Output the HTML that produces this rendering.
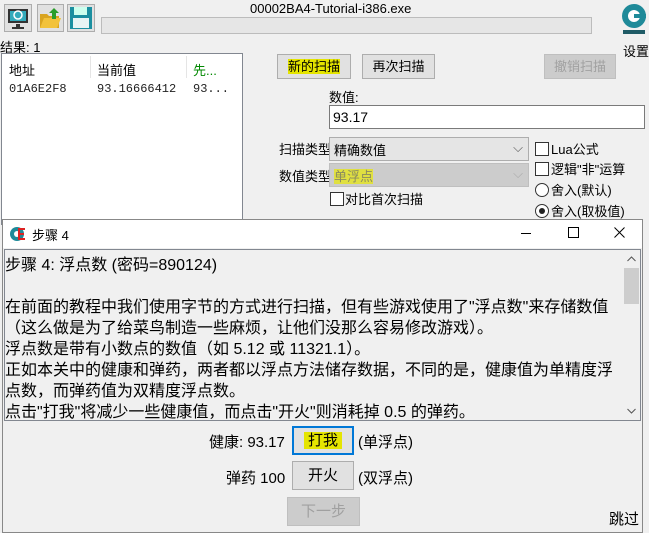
<!DOCTYPE html>
<html><head><meta charset="utf-8"><style>
body{margin:0;width:649px;height:533px;background:#f0f0f0;position:relative;overflow:hidden;font-family:"Liberation Sans","Noto Sans CJK SC",sans-serif;font-size:12px;color:#000}
.a{position:absolute}
.btn{position:absolute;background:#e1e1e1;border:1px solid #adadad;box-sizing:border-box;text-align:center;font-size:13px}
.dis{color:#a0a0a0;background:#cccccc;border-color:#bfbfbf}
.cb{position:absolute;width:12px;height:12px;border:1px solid #333;background:#fff}
.rd{position:absolute;width:12px;height:12px;border:1px solid #333;border-radius:50%;background:#fff}
.hl{background:#e5e500}
</style></head><body>
<!-- toolbar -->
<div class="a" style="left:4px;top:4px;width:28px;height:28px;background:#e1e1e1;border:1px solid #adadad;box-sizing:border-box">
<svg width="26" height="26"><rect x="3" y="4" width="20" height="14" fill="#333"/><rect x="5" y="6" width="16" height="10" fill="#3ab"/><circle cx="13" cy="10" r="4" fill="none" stroke="#fff" stroke-width="1.5"/><rect x="11" y="19" width="4" height="3" fill="#333"/><rect x="7" y="22" width="12" height="2" fill="#333"/></svg></div>
<div class="a" style="left:37px;top:4px;width:27px;height:28px;background:#e1e1e1;border:1px solid #adadad;box-sizing:border-box">
<svg width="26" height="26"><path d="M2 9h7l2 2h10v12H2z" fill="#d9a420"/><path d="M2 23l4-10h17l-4 10z" fill="#f2c23a"/><path d="M16 3l5 5h-3v6h-4V8h-3z" fill="#2a9d2a"/></svg></div>
<div class="a" style="left:67px;top:4px;width:28px;height:28px;background:#e1e1e1;border:1px solid #adadad;box-sizing:border-box">
<svg width="26" height="26"><rect x="2" y="2" width="22" height="22" fill="#1b8fa0"/><rect x="6" y="2" width="13" height="8" fill="#cfe"/><rect x="5" y="13" width="16" height="10" fill="#e8f4f4"/></svg></div>
<div class="a" style="left:250px;top:1px;font-size:13px">00002BA4-Tutorial-i386.exe</div>
<div class="a" style="left:101px;top:17px;width:489px;height:15px;background:#e6e6e6;border:1px solid #bcbcbc"></div>
<svg class="a" style="left:620px;top:2px" width="28" height="34"><circle cx="14" cy="14" r="12" fill="#1f8a99"/><circle cx="14" cy="14" r="6" fill="#fff"/><rect x="14" y="12" width="12" height="4" fill="#1f8a99"/><rect x="3" y="28" width="22" height="4" fill="#1f5b66"/></svg>
<div class="a" style="left:623px;top:41px;font-size:13px">设置</div>
<div class="a" style="left:0;top:37px;font-size:13px">结果: 1</div>
<!-- list -->
<div class="a" style="left:1px;top:53px;width:240px;height:170px;background:#fff;border:1px solid #828790"></div>
<div class="a" style="left:9px;top:60px;font-size:13px">地址</div>
<div class="a" style="left:90px;top:56px;width:1px;height:22px;background:#e5e5e5"></div>
<div class="a" style="left:97px;top:60px;font-size:13px">当前值</div>
<div class="a" style="left:186px;top:56px;width:1px;height:22px;background:#e5e5e5"></div>
<div class="a" style="left:193px;top:60px;font-size:13px;color:#080">先...</div>
<div class="a" style="left:9px;top:82px;font-family:'Liberation Mono',monospace;font-size:12px;color:#222">01A6E2F8</div>
<div class="a" style="left:97px;top:82px;font-family:'Liberation Mono',monospace;font-size:12px;color:#222">93.16666412</div>
<div class="a" style="left:193px;top:82px;font-family:'Liberation Mono',monospace;font-size:12px;color:#222">93...</div>
<!-- buttons -->
<div class="btn" style="left:277px;top:54px;width:74px;height:25px;line-height:23px"><span class="hl">新的扫描</span></div>
<div class="btn" style="left:362px;top:54px;width:73px;height:25px;line-height:23px">再次扫描</div>
<div class="btn dis" style="left:544px;top:54px;width:72px;height:25px;line-height:23px">撤销扫描</div>
<div class="a" style="left:329px;top:87px;font-size:13px">数值:</div>
<div class="a" style="left:329px;top:105px;width:316px;height:24px;background:#fff;border:1px solid #7a7a7a;box-sizing:border-box;font-size:14px;padding:3px 3px">93.17</div>
<div class="a" style="left:279px;top:139px;font-size:13px">扫描类型</div>
<div class="a" style="left:329px;top:137px;width:200px;height:24px;background:#e5e5e5;border:1px solid #adadad;box-sizing:border-box;font-size:13px;padding:2px 4px">精确数值<span style="position:absolute;right:5px;top:2px;color:#555">⌵</span></div>
<div class="a" style="left:279px;top:166px;font-size:13px">数值类型</div>
<div class="a" style="left:329px;top:163px;width:200px;height:24px;background:#cccccc;border:1px solid #bfbfbf;box-sizing:border-box;font-size:13px;padding:2px 4px;color:#8a8a60"><span class="hl" style="background:#e0e040">单浮点</span><span style="position:absolute;right:5px;top:2px;color:#aaa">⌵</span></div>
<div class="cb" style="left:330px;top:192px"></div><div class="a" style="left:345px;top:189px;font-size:13px">对比首次扫描</div>
<div class="cb" style="left:535px;top:142px"></div><div class="a" style="left:551px;top:139px;font-size:13px">Lua公式</div>
<div class="cb" style="left:535px;top:162px"></div><div class="a" style="left:551px;top:159px;font-size:13px">逻辑"非"运算</div>
<div class="rd" style="left:535px;top:183px"></div><div class="a" style="left:551px;top:180px;font-size:13px">舍入(默认)</div>
<div class="rd" style="left:535px;top:204px"><div style="position:absolute;left:3px;top:3px;width:6px;height:6px;border-radius:50%;background:#222"></div></div><div class="a" style="left:551px;top:201px;font-size:13px">舍入(取极值)</div>
<!-- dialog -->
<div class="a" style="left:2px;top:219px;width:641px;height:314px;background:#f0f0f0;border:1px solid #888;box-sizing:border-box"></div>
<div class="a" style="left:3px;top:220px;width:639px;height:28px;background:#fff"></div>
<svg class="a" style="left:9px;top:225px" width="18" height="18"><circle cx="8" cy="9" r="7" fill="#1f8a99"/><circle cx="8" cy="9" r="3" fill="#fff"/><path d="M9 3h7v2h-5v3h4v2h-4v3h5v2H9z" fill="#d22"/></svg>
<div class="a" style="left:32px;top:225px;font-size:13px">步骤 4</div>
<div class="a" style="left:521px;top:233px;width:10px;height:1px;background:#000"></div>
<div class="a" style="left:568px;top:227px;width:9px;height:9px;border:1px solid #000"></div>
<svg class="a" style="left:614px;top:227px" width="11" height="11"><path d="M0.5 0.5L10.5 10.5M10.5 0.5L0.5 10.5" stroke="#000" stroke-width="1"/></svg>
<div class="a" style="left:4px;top:249px;width:637px;height:172px;background:#f0f0f0;border:1px solid #828790;box-sizing:border-box;overflow:hidden">
<div style="position:absolute;left:0;top:5px;width:618px;font-size:16px;line-height:21px">步骤 4: 浮点数 (密码=890124)<br><br>在前面的教程中我们使用字节的方式进行扫描，但有些游戏使用了"浮点数"来存储数值（这么做是为了给菜鸟制造一些麻烦，让他们没那么容易修改游戏）。<br>浮点数是带有小数点的数值（如 5.12 或 11321.1）。<br>正如本关中的健康和弹药，两者都以浮点方法储存数据，不同的是，健康值为单精度浮点数，而弹药值为双精度浮点数。<br>点击"打我"将减少一些健康值，而点击"开火"则消耗掉 0.5 的弹药。</div>
<div style="position:absolute;right:0;top:0;width:17px;height:170px;background:#f0f0f0"></div>
<div style="position:absolute;right:1px;top:18px;width:15px;height:36px;background:#cdcdcd"></div>
<svg style="position:absolute;right:4px;top:6px" width="9" height="6"><path d="M0.5 5L4.5 1L8.5 5" stroke="#555" fill="none"/></svg>
<svg style="position:absolute;right:4px;bottom:6px" width="9" height="6"><path d="M0.5 1L4.5 5L8.5 1" stroke="#555" fill="none"/></svg>
</div>
<div class="a" style="left:209px;top:431px;font-size:15px">健康: 93.17</div>
<div class="btn" style="left:292px;top:426px;width:62px;height:29px;line-height:25px;border:2px solid #0078d7;font-size:15px"><span class="hl">&nbsp;打我&nbsp;</span></div>
<div class="a" style="left:358px;top:431px;font-size:15px">(单浮点)</div>
<div class="a" style="left:226px;top:467px;font-size:15px">弹药 100</div>
<div class="btn" style="left:292px;top:461px;width:62px;height:29px;line-height:27px;font-size:15px">开火</div>
<div class="a" style="left:358px;top:467px;font-size:15px">(双浮点)</div>
<div class="btn dis" style="left:287px;top:497px;width:73px;height:29px;line-height:27px;font-size:15px">下一步</div>
<div class="a" style="left:609px;top:508px;font-size:15px">跳过</div>
</body></html>
